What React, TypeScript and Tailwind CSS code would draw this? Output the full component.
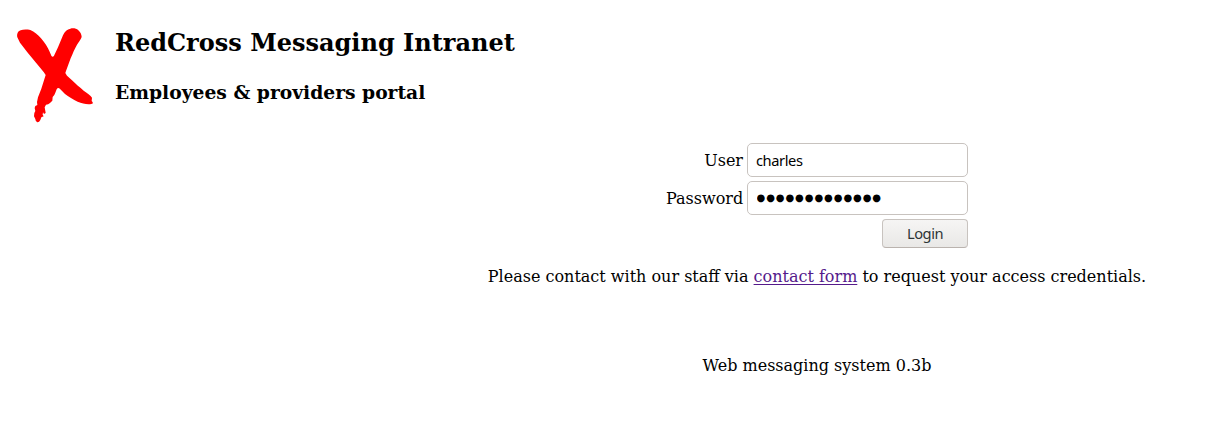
import React from 'react';

const fieldClass =
  "block h-[34px] w-[221px] rounded-[5px] border border-[#c8c3bf] bg-white text-black outline-none";

function CrossLogo() {
  return (
    <svg className="mt-[15px] h-[120px] w-[115px] shrink-0" viewBox="0 0 345 360" aria-label="RedCross">
      <path
        fill="#ff0000"
        d="M52 67C50 58 53 49 62 46C69 43 80 43 91 45C103 49 114 60 123 70C134 83 143 96 149 110L154 122Q158 128 162 122L174 97L189 61C194 49 202 43 211 41C219 39 229 40 235 46C241 51 245 59 245 66C243 73 236 81 231 89C224 101 218 116 212 130L198 168L196 174L201 182L216 196C228 208 239 217 251 227C261 235 272 240 276 248L275 258Q278 261 279 265L274 267C261 269 247 266 233 260C220 254 205 245 195 237L181 223C176 218 173 218 170 223L166 233Q163 242 158 246L157 257L150 264Q145 269 138 269L134 277L136 288L137 294L132 297L129 292L128 299L131 304L124 307L121 315Q117 323 112 322Q106 319 106 312L102 304L103 294L106 288L104 279L106 273L112 270L111 261L114 247L124 221L137 180L131 171L108 143L82 112L60 83Z"
      />
    </svg>
  );
}

export default function App() {
  return (
    <main className="flex h-[432px] w-full flex-col overflow-hidden bg-white font-['DejaVu_Serif',serif] text-base text-black">
      <header className="flex h-[143px] shrink-0 items-start">
        <CrossLogo />
        <div className="pt-[29px]">
          <h2 className="text-2xl leading-7 font-bold">RedCross Messaging Intranet</h2>
          <h3 className="mt-6 text-[18.72px] leading-[22px] font-bold">Employees &amp; providers portal</h3>
        </div>
      </header>
      <section className="ml-[405px] flex w-[824px] flex-col items-center">
        <form className="grid grid-cols-[77px_221px] items-center gap-1" onSubmit={(e) => e.preventDefault()}>
          <label htmlFor="user" className="pt-0.5 text-right">User</label>
          <input
            id="user"
            className={`${fieldClass} px-2 font-['Noto_Sans',sans-serif] text-[14.67px] tracking-[-0.42px]`}
            defaultValue="charles"
          />
          <label htmlFor="password" className="pt-0.5 text-right">Password</label>
          <input
            id="password"
            className={`${fieldClass} px-[8.5px] pb-0.5 font-['DejaVu_Sans',sans-serif] text-[10px] tracking-[0.93px]`}
            defaultValue="●●●●●●●●●●●●●"
          />
          <button className="col-start-2 h-[29px] w-[86px] justify-self-end rounded-[4px] border border-[#c8c3bf] border-b-[#bab3ae] bg-linear-to-b from-[#f6f5f4] to-[#e9e8e6] font-['Noto_Sans',sans-serif] text-[14.67px] leading-[27px] tracking-[-0.45px] text-[#2e3436]">
            Login
          </button>
        </form>
        <p className="mt-[19px] leading-5 whitespace-nowrap">
          Please contact with our staff via{' '}
          <a href="#contact" className="text-[#551a8b] underline decoration-1 underline-offset-2">contact form</a> to request your access credentials.
        </p>
        <footer className="mt-[69px] leading-5">Web messaging system 0.3b</footer>
      </section>
    </main>
  );
}
